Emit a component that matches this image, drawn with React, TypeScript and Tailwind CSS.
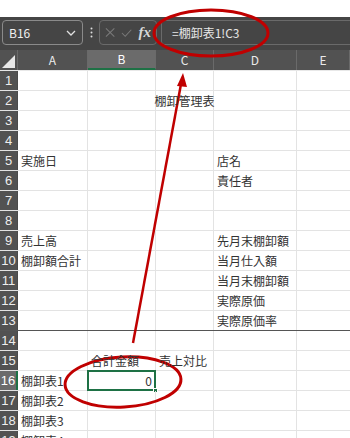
import React from "react";

const cols = [
  { key: "A", w: 70 },
  { key: "B", w: 68 },
  { key: "C", w: 58 },
  { key: "D", w: 83 },
  { key: "E", w: 53 },
];

type Cell = { text: string; align?: "left" | "center" | "right" };
const data: Record<number, Record<string, Cell>> = {
  2: { C: { text: "棚卸管理表", align: "center" } },
  5: { A: { text: "実施日" }, D: { text: "店名" } },
  6: { D: { text: "責任者" } },
  9: { A: { text: "売上高" }, D: { text: "先月末棚卸額" } },
  10: { A: { text: "棚卸額合計" }, D: { text: "当月仕入額" } },
  11: { D: { text: "当月末棚卸額" } },
  12: { D: { text: "実際原価" } },
  13: { D: { text: "実際原価率" } },
  15: { B: { text: "合計金額" }, C: { text: "売上対比" } },
  16: { A: { text: "棚卸表1" }, B: { text: "0", align: "right" } },
  17: { A: { text: "棚卸表2" } },
  18: { A: { text: "棚卸表3" } },
  19: { A: { text: "棚卸表4" } },
};

const font = { fontFamily: '"Noto Sans CJK JP", "Noto Sans", sans-serif' };

export default function App() {
  const rows = Array.from({ length: 19 }, (_, i) => i + 1);
  return (
    <div className="relative w-[350px] h-[438px] overflow-hidden bg-white" style={font}>
      <div className="h-[17px] bg-white" />
      {/* formula bar */}
      <div className="h-[33px] bg-[#454545] flex items-center pl-[2px] pb-[2px]">
        <div className="w-[81px] h-[25px] border border-[#8a8a8a] rounded-[4px] flex items-center justify-between px-[6px]">
          <span className="text-[12px] text-[#f0f0f0]">B16</span>
          <svg width="10" height="6" viewBox="0 0 10 6"><path d="M1 1 L5 5 L9 1" stroke="#e0e0e0" strokeWidth="1.3" fill="none" /></svg>
        </div>
        <div className="w-[16px] flex justify-center">
          <svg width="3" height="11" viewBox="0 0 3 11"><circle cx="1.5" cy="1.5" r="1" fill="#ddd" /><circle cx="1.5" cy="5.5" r="1" fill="#ddd" /><circle cx="1.5" cy="9.5" r="1" fill="#ddd" /></svg>
        </div>
        <div className="w-[58px] h-[25px] border border-[#6a6a6a] rounded-[4px] flex items-center gap-[6px] px-[5px]">
          <svg width="11" height="11" viewBox="0 0 11 11"><path d="M1 1 L10 10 M10 1 L1 10" stroke="#7a7a7a" strokeWidth="1.1" /></svg>
          <svg width="12" height="10" viewBox="0 0 12 10"><path d="M1 5 L4.5 8.5 L11 1.5" stroke="#7a7a7a" strokeWidth="1.1" fill="none" /></svg>
          <span className="text-[15px] italic font-bold text-[#d8d8d8] leading-none" style={{ fontFamily: '"Liberation Serif", serif' }}>fx</span>
        </div>
        <div className="ml-[4px] flex-1 h-[25px] border border-[#6a6a6a] rounded-l-[4px] border-r-0 flex items-center pl-[10px]">
          <span className="text-[12px] text-[#e6e6e6]">=棚卸表1!C3</span>
        </div>
      </div>
      {/* column header */}
      <div className="flex h-[21px] bg-[#525252] border-b border-[#e8e8e8]">
        <div className="w-[18px] relative border-r border-[#6a6a6a]">
          <svg className="absolute right-[2px] bottom-[2px]" width="13" height="13" viewBox="0 0 13 13"><path d="M13 0 L13 13 L0 13 Z" fill="#e8e8e8" /></svg>
        </div>
        {cols.map((c) => (
          <div
            key={c.key}
            style={{ width: c.w }}
            className={
              "flex items-center justify-center text-[12px] border-r border-[#6a6a6a] " +
              (c.key === "B" ? "bg-[#6b6b6b] text-white border-b-2 border-b-[#1e7145]" : "text-[#eaeaea]")
            }
          >
            {c.key}
          </div>
        ))}
      </div>
      {/* rows */}
      {rows.map((r) => (
        <div key={r} className={"flex h-[20px] " + (r === 13 ? "border-b border-[#555]" : "border-b border-[#e3e3e3]")}>
          <div
            className={
              "w-[18px] shrink-0 flex items-center justify-center text-[13px] " +
              (r === 16 ? "bg-[#6b6b6b] text-white border-r-2 border-[#1e7145]" : "bg-[#525252] text-[#eeeeee] border-r border-[#4a4a4a]")
            }
            style={{ fontFamily: '"Liberation Sans", sans-serif' }}
          >
            {r}
          </div>
          {cols.map((c) => {
            const cell = data[r]?.[c.key];
            const selected = r === 16 && c.key === "B";
            return (
              <div
                key={c.key}
                style={{ width: c.w }}
                className={
                  "relative shrink-0 flex items-center text-[12px] text-[#333] whitespace-nowrap " +
                  (c.key === "E" ? "" : "border-r border-[#e3e3e3] ") +
                  (cell?.align === "center" ? "justify-center overflow-visible" : cell?.align === "right" ? "justify-end pr-[3px]" : "pl-[3px]")
                }
              >
                {cell && <span className="relative z-[1]">{cell.text}</span>}
                {selected && (
                  <>
                    <div className="absolute left-[-1px] top-[-1px] right-[-1px] bottom-[-1px] border-2 border-[#1e7145]" />
                    <div className="absolute right-[-3px] bottom-[-3px] w-[5px] h-[5px] bg-[#1e7145] border border-white" />
                  </>
                )}
              </div>
            );
          })}
        </div>
      ))}
      {/* annotations */}
      <svg className="absolute left-0 top-0 pointer-events-none" width="350" height="438" viewBox="0 0 350 438">
        <ellipse cx="211" cy="33" rx="57" ry="23" fill="none" stroke="#c00000" strokeWidth="3" />
        <ellipse cx="123" cy="382" rx="58" ry="25" fill="none" stroke="#c00000" strokeWidth="3" transform="rotate(-3 123 382)" />
        <line x1="133" y1="343" x2="181" y2="84" stroke="#c00000" strokeWidth="2.5" />
        <path d="M183 73 L177 86 L187 87 Z" fill="#c00000" />
      </svg>
    </div>
  );
}
